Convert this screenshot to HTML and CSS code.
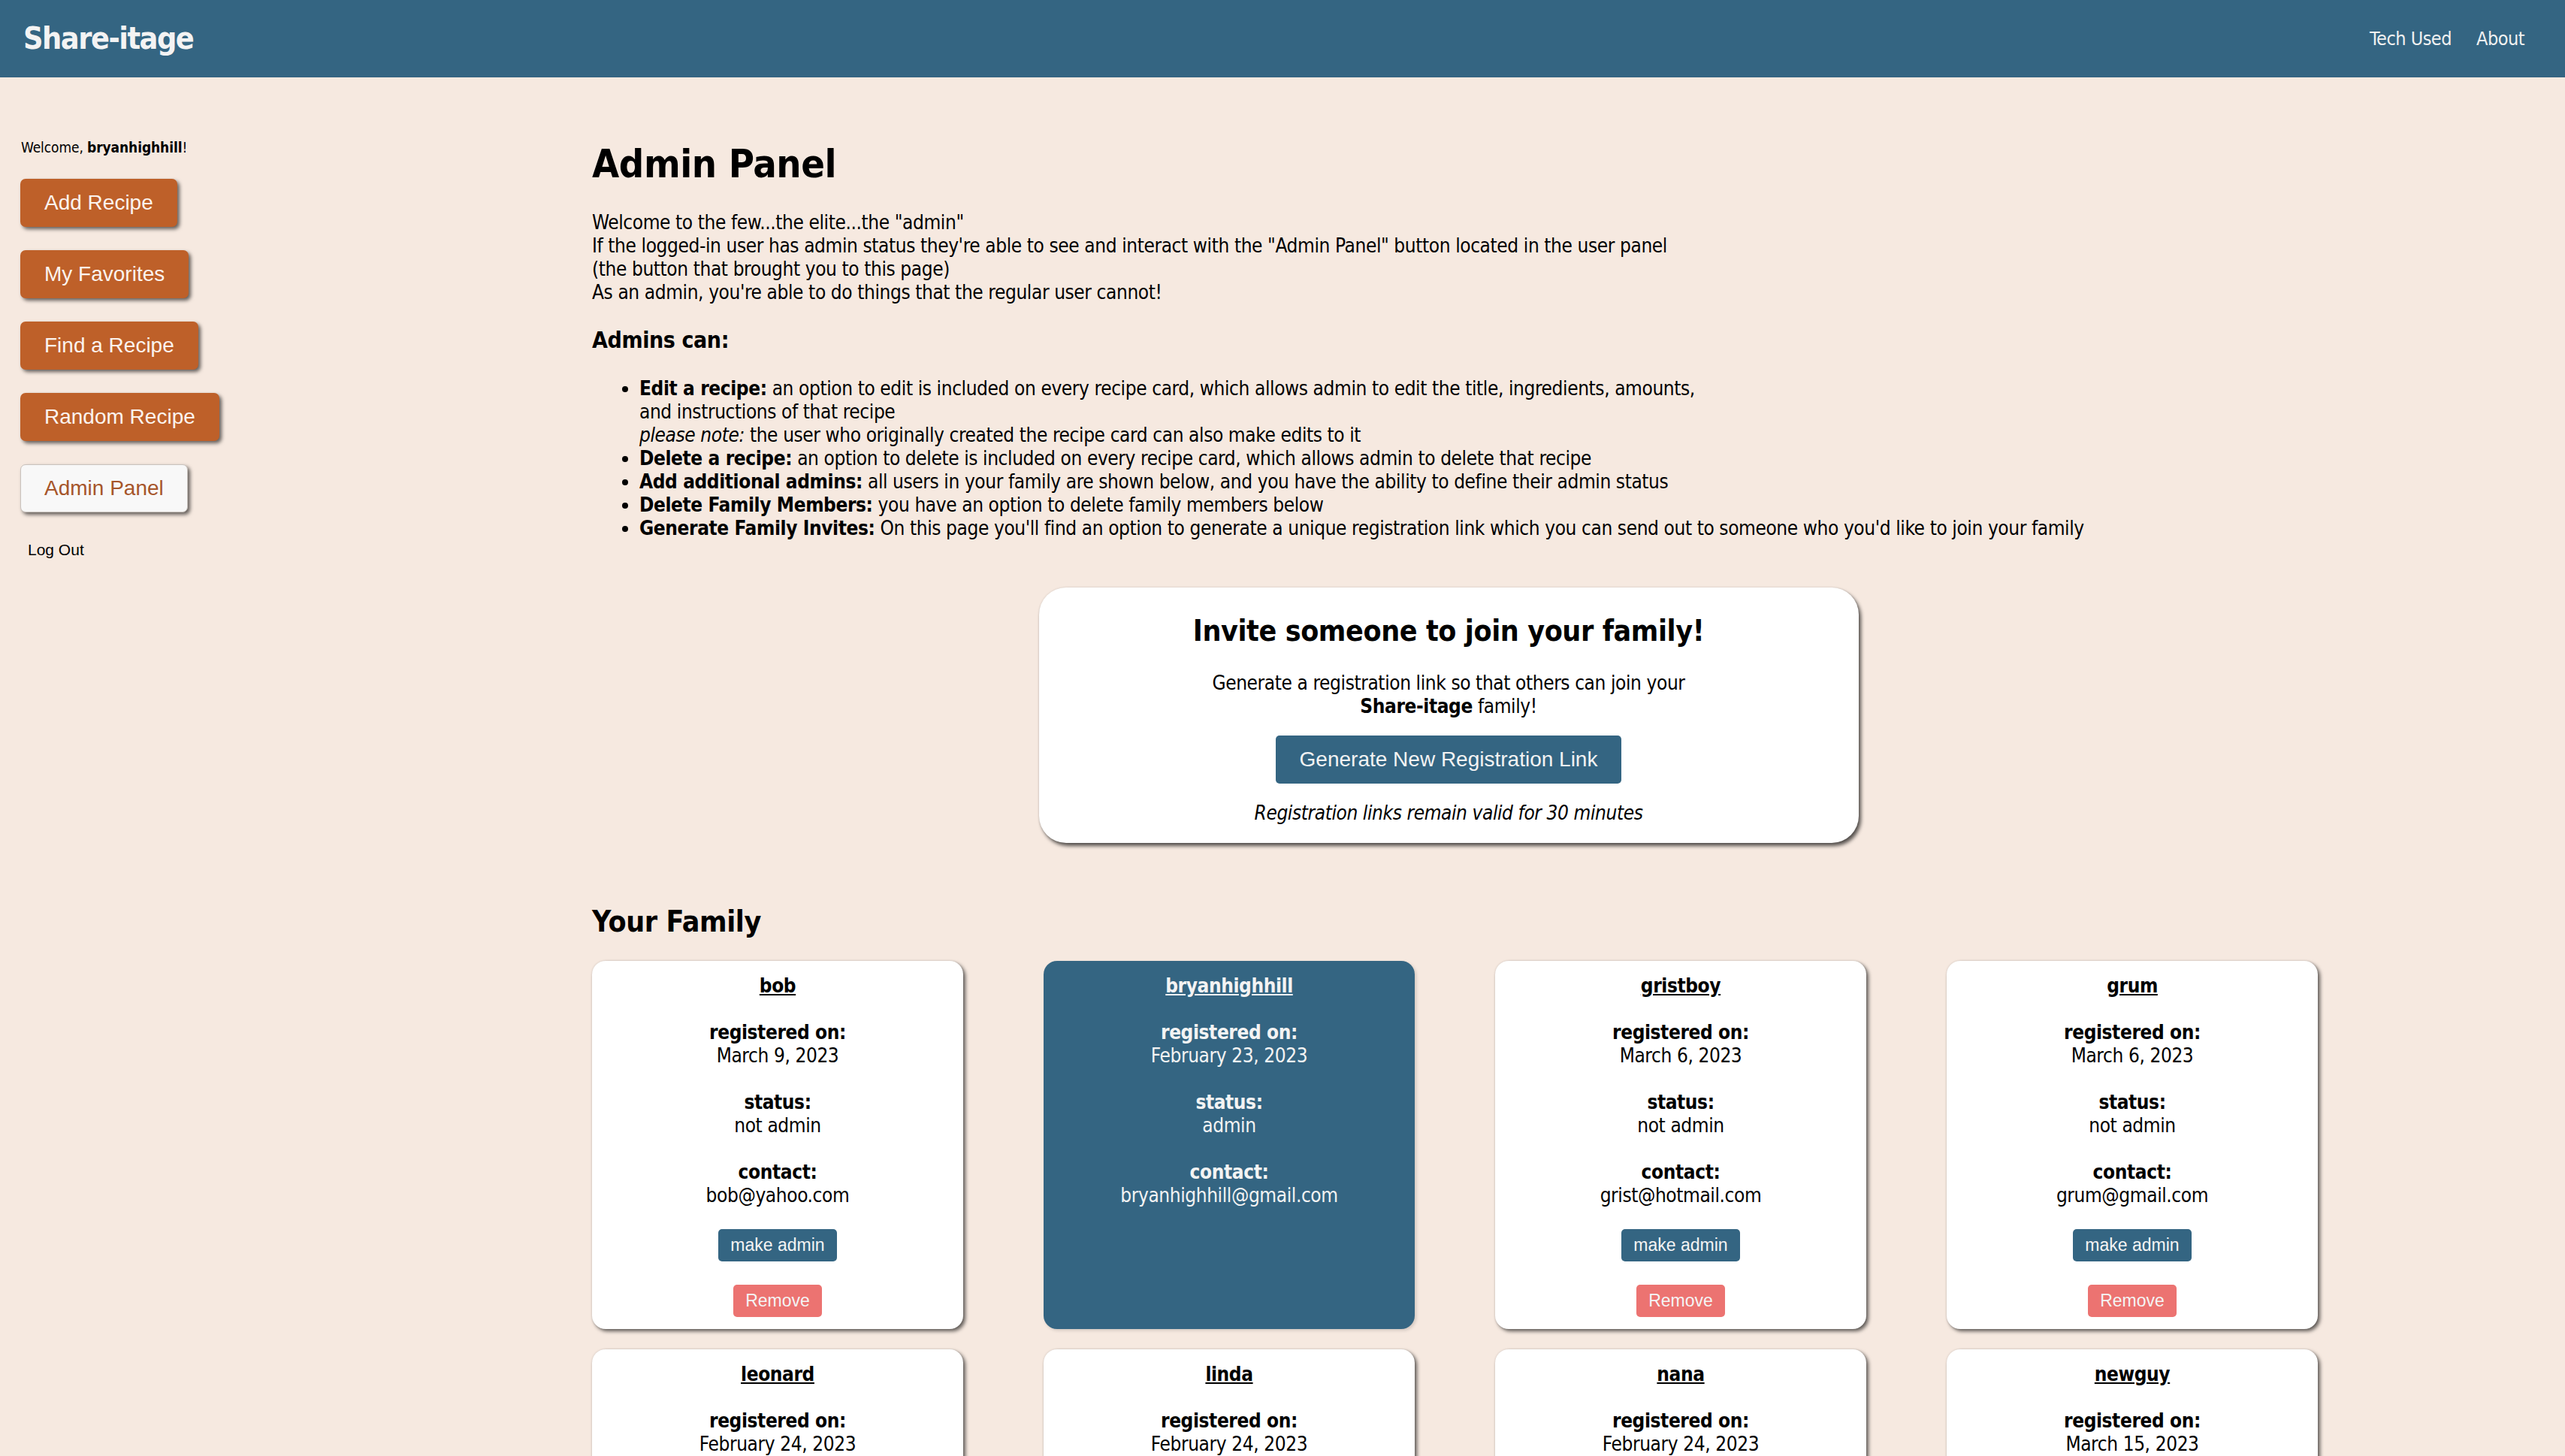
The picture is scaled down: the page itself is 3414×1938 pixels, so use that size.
FILE: index.html
```html
<!DOCTYPE html>
<html lang="en">
<head>
<meta charset="utf-8">
<title>Share-itage | Admin Panel</title>
<link rel="stylesheet" href="styles.css">
</head>
<body>
<header class="topbar">
  <a class="logo" href="#">Share-itage</a>
  <nav class="topnav">
    <a href="#">Tech Used</a>
    <a href="#">About</a>
  </nav>
</header>
<div class="layout">
  <aside class="sidebar">
    <p class="welcome">Welcome, <b>bryanhighhill</b>!</p>
    <div class="side-buttons">
      <button class="side-btn">Add Recipe</button>
      <button class="side-btn">My Favorites</button>
      <button class="side-btn">Find a Recipe</button>
      <button class="side-btn">Random Recipe</button>
      <button class="side-btn side-btn-active">Admin Panel</button>
    </div>
    <a class="logout" href="#">Log Out</a>
  </aside>
  <main class="main">
    <h1 class="page-title">Admin Panel</h1>
    <p class="intro">Welcome to the few...the elite...the "admin"<br>If the logged-in user has admin status they're able to see and interact with the "Admin Panel" button located in the user panel<br>(the button that brought you to this page)<br>As an admin, you're able to do things that the regular user cannot!</p>
    <h3 class="sub-title">Admins can:</h3>
    <ul class="abilities">
      <li><b>Edit a recipe:</b> an option to edit is included on every recipe card, which allows admin to edit the title, ingredients, amounts,<br>and instructions of that recipe<br><i>please note:</i> the user who originally created the recipe card can also make edits to it</li>
      <li><b>Delete a recipe:</b> an option to delete is included on every recipe card, which allows admin to delete that recipe</li>
      <li><b>Add additional admins:</b> all users in your family are shown below, and you have the ability to define their admin status</li>
      <li><b>Delete Family Members:</b> you have an option to delete family members below</li>
      <li><b>Generate Family Invites:</b> On this page you'll find an option to generate a unique registration link which you can send out to someone who you'd like to join your family</li>
    </ul>
    <section class="invite">
      <h2 class="invite-title">Invite someone to join your family!</h2>
      <p class="invite-text">Generate a registration link so that others can join your<br><b>Share-itage</b> family!</p>
      <button class="gen-btn">Generate New Registration Link</button>
      <p class="invite-note">Registration links remain valid for 30 minutes</p>
    </section>
    <h2 class="family-title">Your Family</h2>
    <div class="family-grid">
      <div class="member">
        <a class="member-name" href="#">bob</a>
        <p class="field"><b>registered on:</b><br>March 9, 2023</p>
        <p class="field"><b>status:</b><br>not admin</p>
        <p class="field"><b>contact:</b><br>bob@yahoo.com</p>
        <button class="make-admin">make admin</button>
        <button class="remove">Remove</button>
      </div>
      <div class="member member-self">
        <a class="member-name" href="#">bryanhighhill</a>
        <p class="field"><b>registered on:</b><br>February 23, 2023</p>
        <p class="field"><b>status:</b><br>admin</p>
        <p class="field"><b>contact:</b><br>bryanhighhill@gmail.com</p>
      </div>
      <div class="member">
        <a class="member-name" href="#">gristboy</a>
        <p class="field"><b>registered on:</b><br>March 6, 2023</p>
        <p class="field"><b>status:</b><br>not admin</p>
        <p class="field"><b>contact:</b><br>grist@hotmail.com</p>
        <button class="make-admin">make admin</button>
        <button class="remove">Remove</button>
      </div>
      <div class="member">
        <a class="member-name" href="#">grum</a>
        <p class="field"><b>registered on:</b><br>March 6, 2023</p>
        <p class="field"><b>status:</b><br>not admin</p>
        <p class="field"><b>contact:</b><br>grum@gmail.com</p>
        <button class="make-admin">make admin</button>
        <button class="remove">Remove</button>
      </div>
      <div class="member">
        <a class="member-name" href="#">leonard</a>
        <p class="field"><b>registered on:</b><br>February 24, 2023</p>
        <p class="field"><b>status:</b><br>not admin</p>
        <p class="field"><b>contact:</b><br>leonard@gmail.com</p>
        <button class="make-admin">make admin</button>
        <button class="remove">Remove</button>
      </div>
      <div class="member">
        <a class="member-name" href="#">linda</a>
        <p class="field"><b>registered on:</b><br>February 24, 2023</p>
        <p class="field"><b>status:</b><br>not admin</p>
        <p class="field"><b>contact:</b><br>linda@gmail.com</p>
        <button class="make-admin">make admin</button>
        <button class="remove">Remove</button>
      </div>
      <div class="member">
        <a class="member-name" href="#">nana</a>
        <p class="field"><b>registered on:</b><br>February 24, 2023</p>
        <p class="field"><b>status:</b><br>not admin</p>
        <p class="field"><b>contact:</b><br>nana@gmail.com</p>
        <button class="make-admin">make admin</button>
        <button class="remove">Remove</button>
      </div>
      <div class="member">
        <a class="member-name" href="#">newguy</a>
        <p class="field"><b>registered on:</b><br>March 15, 2023</p>
        <p class="field"><b>status:</b><br>not admin</p>
        <p class="field"><b>contact:</b><br>newguy@gmail.com</p>
        <button class="make-admin">make admin</button>
        <button class="remove">Remove</button>
      </div>
    </div>
  </main>
</div>
</body>
</html>
```
FILE: styles.css
```css
* { box-sizing: border-box; }

body {
  margin: 0;
  background: #f6e9e0;
  color: #000;
  font-family: "DejaVu Sans Condensed", "DejaVu Sans", sans-serif;
  font-stretch: semi-condensed;
  font-size: 26px;
  line-height: 31px;
  letter-spacing: -0.4px;
}

/* top bar */
.topbar {
  height: 103px;
  background: #346582;
  display: flex;
  align-items: center;
  justify-content: space-between;
  padding: 0 54px 0 31px;
}
.logo {
  color: #f3f3f3;
  font-weight: bold;
  font-size: 41px;
  line-height: 50px;
  letter-spacing: -1.5px;
  text-decoration: none;
  margin-top: -2px;
}
.topnav {
  display: flex;
  gap: 33px;
}
.topnav a {
  color: #f1f1f1;
  text-decoration: none;
  font-size: 25px;
  letter-spacing: -0.5px;
}

/* layout */
.layout {
  display: flex;
  align-items: flex-start;
}
.sidebar {
  flex: none;
  width: 788px;
  padding: 81px 0 0 27px;
}
.welcome {
  margin: 0 0 30px 1px;
  font-size: 19px;
  line-height: 24px;
  letter-spacing: -0.1px;
}
.side-buttons {
  display: flex;
  flex-direction: column;
  align-items: flex-start;
  gap: 31px;
}
.side-btn {
  font-family: "Liberation Sans", Arial, sans-serif;
  font-size: 28px;
  line-height: 32px;
  letter-spacing: normal;
  padding: 16px 32px;
  border: none;
  border-radius: 7px;
  background: #be6029;
  color: #fbf3ee;
  box-shadow: 3px 3px 5px rgba(0, 0, 0, 0.6);
}
.side-btn-active {
  background: #f8f8f8;
  color: #a6552a;
  border: 1px solid #c9c2bd;
  padding: 15px 31px;
}
.logout {
  display: block;
  margin: 38px 0 0 10px;
  font-family: "Liberation Sans", Arial, sans-serif;
  font-size: 21px;
  line-height: 23px;
  letter-spacing: normal;
  color: #000;
  text-decoration: none;
}

/* main */
.main {
  flex: none;
  width: 2280px;
  padding-top: 84px;
}
.page-title {
  margin: 0;
  font-size: 52px;
  line-height: 63px;
}
.intro {
  margin: 31px 0 0;
}
.sub-title {
  margin: 30px 0 0;
  font-size: 30px;
  line-height: 36px;
}
.abilities {
  margin: 31px 0 0;
  padding-left: 63px;
}

/* invite box */
.invite {
  width: 1091px;
  margin: 63px auto 0;
  background: #fff;
  border-radius: 36px;
  padding: 34px 20px 24px;
  text-align: center;
  box-shadow: 3px 4px 5px rgba(0, 0, 0, 0.65), 0 0 3px rgba(0, 0, 0, 0.12);
}
.invite-title {
  margin: 0;
  font-size: 39px;
  line-height: 47px;
}
.invite-text {
  margin: 31px 0 0;
}
.gen-btn {
  margin-top: 23px;
  font-family: "Liberation Sans", Arial, sans-serif;
  font-size: 28px;
  line-height: 32px;
  letter-spacing: normal;
  padding: 16px 32px;
  border: none;
  border-radius: 5px;
  background: #346582;
  color: #f3f3f3;
}
.invite-note {
  margin: 24px 0 0;
  font-style: italic;
}

/* family */
.family-title {
  margin: 81px 0 0;
  font-size: 39px;
  line-height: 47px;
}
.family-grid {
  margin-top: 29px;
  display: grid;
  grid-template-columns: repeat(4, 494px);
  column-gap: 107px;
  row-gap: 27px;
  padding-bottom: 60px;
}
.member {
  background: #fff;
  border-radius: 18px;
  padding: 18px 10px 16px;
  text-align: center;
  display: flex;
  flex-direction: column;
  align-items: center;
  box-shadow: 3px 3px 5px rgba(0, 0, 0, 0.6), 0 0 3px rgba(0, 0, 0, 0.12);
}
.member-name {
  color: #000;
  font-weight: bold;
  text-decoration: underline;
}
.field {
  margin: 31px 0 0;
}
.make-admin,
.remove {
  font-family: "Liberation Sans", Arial, sans-serif;
  font-size: 23px;
  line-height: 27px;
  letter-spacing: normal;
  padding: 8px 16px;
  border: none;
  border-radius: 5px;
  color: #f4f4f4;
}
.make-admin {
  margin-top: 29px;
  background: #346582;
}
.remove {
  margin-top: 31px;
  background: #ec7371;
}
.member-self {
  background: #346582;
  color: #f3f3f3;
  box-shadow: 2px 2px 4px rgba(0, 0, 0, 0.15);
}
.member-self .member-name {
  color: #f3f3f3;
}
```
